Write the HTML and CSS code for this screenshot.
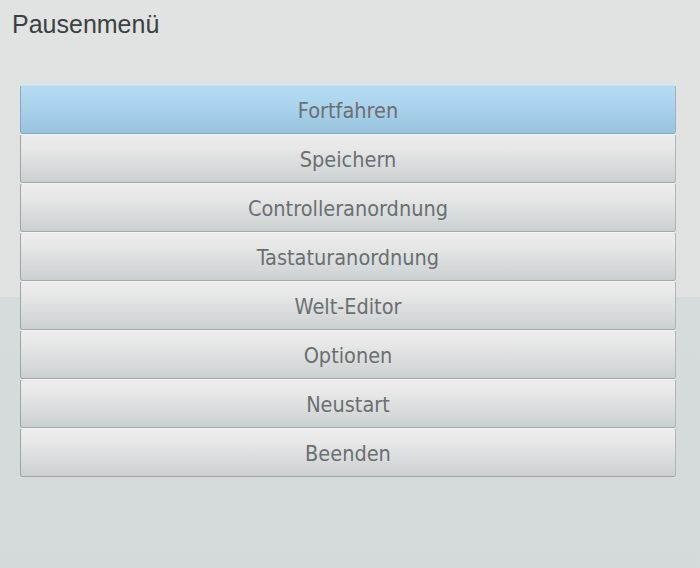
FILE: index.html
```html
<!DOCTYPE html>
<html lang="de">
<head>
<meta charset="utf-8">
<title>Pausenmenü</title>
<link rel="stylesheet" href="styles.css">
</head>
<body>
<div class="screen">
  <h1 class="title">Pausenmenü</h1>
  <div class="menu">
    <div class="btn active">Fortfahren</div>
    <div class="btn">Speichern</div>
    <div class="btn">Controlleranordnung</div>
    <div class="btn">Tastaturanordnung</div>
    <div class="btn">Welt-Editor</div>
    <div class="btn">Optionen</div>
    <div class="btn">Neustart</div>
    <div class="btn">Beenden</div>
  </div>
</div>
</body>
</html>
```
FILE: styles.css
```css
html, body {
  margin: 0;
  padding: 0;
}
body {
  width: 700px;
  height: 568px;
  overflow: hidden;
  background: linear-gradient(to bottom, #e1e3e2 0, #dfe2e1 297px, #d6dbdb 297px, #d4d9d9 568px);
}
.screen {
  padding: 10px 24px 0 20px;
}
.title {
  margin: 0 0 0 -8px;
  font-family: "Liberation Sans", Arial, sans-serif;
  font-weight: normal;
  font-size: 25px;
  line-height: 28px;
  color: #3b4043;
}
.menu {
  margin-top: 47px;
  display: flex;
  flex-direction: column;
}
.btn {
  box-sizing: border-box;
  height: 49px;
  padding-top: 1px;
  display: flex;
  align-items: center;
  justify-content: center;
  font-family: "DejaVu Sans Condensed", "DejaVu Sans", sans-serif;
  font-size: 21.5px;
  color: #6b6f72;
  border-radius: 3px;
  border: 1px solid #b4b9ba;
  border-top-color: #f2f3f3;
  border-left-color: #9ea3a4;
  border-right-color: #b0b5b6;
  border-bottom-color: #a3a8a9;
  background: linear-gradient(to bottom, #ecedec 0%, #e6e7e6 30%, #dcdfdf 55%, #d3d7d8 80%, #cacfd0 100%);
}
.btn.active {
  border-top-color: #bfe2f6;
  border-left-color: #87a9bd;
  border-right-color: #93b4c7;
  border-bottom-color: #84a6ba;
  background: linear-gradient(to bottom, #b6dcf3 0%, #afd6ef 30%, #a6cfe9 55%, #9fc9e3 80%, #98c3de 100%);
}
```
